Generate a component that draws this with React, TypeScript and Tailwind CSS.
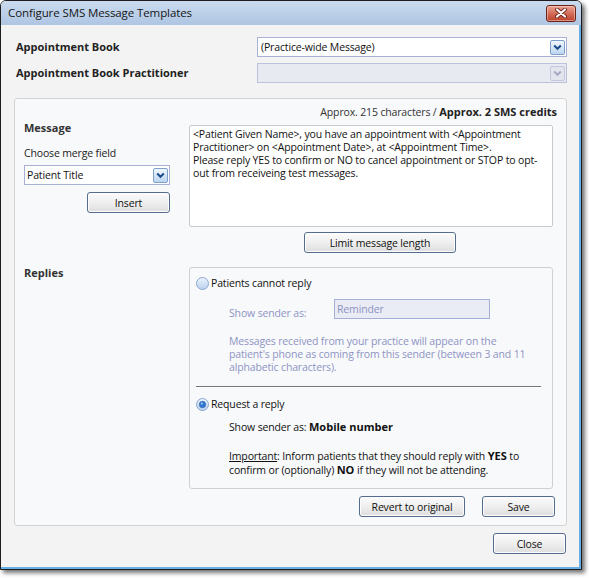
import React from "react";

function DropArrow({ disabled }: { disabled?: boolean }) {
  return (
    <div
      className={
        disabled
          ? "w-[15px] h-[15px] rounded-[2px] border border-[#c3c8dc] bg-[#e3e5ee] flex items-center justify-center"
          : "w-[15px] h-[15px] rounded-[2px] border border-[#7fa0cd] bg-gradient-to-b from-[#f1f7fd] to-[#bcd5f0] flex items-center justify-center"
      }
    >
      <svg width="9" height="7" viewBox="0 0 9 7">
        <path
          d="M1.2 1.5 L4.5 4.8 L7.8 1.5"
          stroke={disabled ? "#a7abc2" : "#1d4c8c"}
          strokeWidth="2"
          fill="none"
        />
      </svg>
    </div>
  );
}

function Radio({ checked, id }: { checked?: boolean; id: string }) {
  return (
    <svg width="13" height="13" viewBox="0 0 13 13" className="shrink-0">
      <defs>
        <linearGradient id={id} x1="0" y1="0" x2="0" y2="1">
          <stop offset="0" stopColor="#eef4fc" />
          <stop offset="1" stopColor="#b9d0ee" />
        </linearGradient>
      </defs>
      <circle cx="6.5" cy="6.5" r="6" fill={`url(#${id})`} stroke="#8aa6cf" />
      {checked && <circle cx="6.5" cy="6.5" r="3.2" fill="#3477cf" stroke="#1e5aa8" strokeWidth="0.6" />}
      {checked && <circle cx="5.8" cy="5.6" r="1" fill="#a9cdf5" />}
    </svg>
  );
}

function Btn({ children, className }: { children: React.ReactNode; className?: string }) {
  return (
    <div
      className={
        "h-[21px] rounded-[3px] border border-[#566c8e] bg-gradient-to-b from-[#fbfbfb] via-[#efefef] to-[#dedede] shadow-[inset_0_0_0_1px_#fdfdfd] flex items-center justify-center text-[#111] " +
        (className ?? "")
      }
    >
      {children}
    </div>
  );
}

export default function App() {
  const dis = "text-[#8e94c4]";
  const bold = "font-bold text-[11px] tracking-normal";
  return (
    <div className="w-[589px] h-[578px] bg-white font-['Open_Sans',sans-serif] text-[10.5px] tracking-[-0.15px] text-[#111] leading-[14px]">
      <div className="w-[582px] h-[570px] rounded-t-[6px] border border-[#1d1d1d] shadow-[3px_3px_4px_rgba(0,0,0,0.55)] flex flex-col overflow-hidden bg-[#f3f3f3]">
        {/* Title bar */}
        <div className="h-[24px] shrink-0 bg-gradient-to-b from-[#cadbef] to-[#aec5e2] flex items-center pl-[7px] pr-[5px]">
          <span className="text-[11.5px] tracking-[-0.1px] text-[#151515]">Configure SMS Message Templates</span>
          <div className="ml-auto w-[30px] h-[17px] rounded-[3px] border border-[#6b2216] bg-gradient-to-b from-[#e9a597] via-[#d46d58] to-[#b8412c] flex items-center justify-center shadow-[inset_0_0_0_1px_rgba(255,220,210,0.5)]">
            <svg width="14" height="10" viewBox="0 0 14 10">
              <path d="M3 1.5 L11 8.5 M11 1.5 L3 8.5" stroke="#6e241a" strokeWidth="4" strokeLinecap="round" />
              <path d="M3 1.5 L11 8.5 M11 1.5 L3 8.5" stroke="#ffffff" strokeWidth="2.2" strokeLinecap="round" />
            </svg>
          </div>
        </div>

        {/* Content */}
        <div className="flex-1 flex flex-col pl-[13px] pr-[12px] border-r-2 border-b-2 border-[#67b0e6]">
          {/* Row 1 */}
          <div className="mt-[12px] flex items-center h-[20px]">
            <span className={"pl-[2px] text-[#222] " + bold}>Appointment Book</span>
            <div className="ml-auto w-[310px] h-[20px] bg-white border border-[#a9b0d6] flex items-center pl-[3px] pr-[1px]">
              <span className="text-[#111]">(Practice-wide Message)</span>
              <div className="ml-auto">
                <DropArrow />
              </div>
            </div>
          </div>
          {/* Row 2 */}
          <div className="mt-[6px] flex items-center h-[20px]">
            <span className={"pl-[2px] text-[#222] " + bold}>Appointment Book Practitioner</span>
            <div className="ml-auto w-[310px] h-[20px] bg-[#e8eaf2] border border-[#bcc2da] flex items-center pr-[1px]">
              <div className="ml-auto">
                <DropArrow disabled />
              </div>
            </div>
          </div>

          {/* Panel */}
          <div className="mt-[15px] h-[428px] rounded-[3px] border border-[#d3d3d3] bg-[#f8f9fb] flex flex-col">
            <div className="pt-[6px] pr-[9px] text-right text-[#333] h-[20px]">
              Approx. 215 characters / <span className={"text-[#222] " + bold}>Approx. 2 SMS credits</span>
            </div>

            {/* Message row */}
            <div className="mt-[2px] flex">
              <div className="w-[174px] pl-[9px] flex flex-col">
                <div className={"text-[#333] h-[14px] " + bold}>Message</div>
                <div className="mt-[11px] h-[14px] text-[#222]">Choose merge field</div>
                <div className="mt-[5px] w-[146px] h-[20px] bg-white border border-[#a9b0d6] flex items-center pl-[2px] pr-[1px]">
                  <span className="text-[#111]">Patient Title</span>
                  <div className="ml-auto">
                    <DropArrow />
                  </div>
                </div>
                <Btn className="mt-[7px] ml-[63px] w-[83px]">Insert</Btn>
              </div>
              <div className="flex flex-col">
                <div className="mt-[4px] w-[364px] h-[102px] bg-white border border-[#c9c9c9] rounded-[2px] pl-[3px] pt-[2px] leading-[13px] whitespace-nowrap text-[#111]">
                  <div>{"<Patient Given Name>, you have an appointment with <Appointment"}</div>
                  <div>{"Practitioner> on <Appointment Date>, at <Appointment Time>."}</div>
                  <div>{"Please reply YES to confirm or NO to cancel appointment or STOP to opt-"}</div>
                  <div>{"out from receiveing test messages."}</div>
                </div>
                <Btn className="mt-[5px] ml-[115px] w-[152px]">Limit message length</Btn>
              </div>
            </div>

            {/* Replies row */}
            <div className="mt-[13px] flex">
              <div className={"w-[174px] pl-[9px] text-[#333] h-[14px] " + bold}>Replies</div>
              <div className="mt-[1px] w-[364px] h-[222px] rounded-[3px] border border-[#d0d0d0] bg-[#f8f9fb] flex flex-col">
                <div className="mt-[8px] pl-[6px] h-[14px] flex items-center gap-[2px]">
                  <Radio id="r1" />
                  <span className="text-[#111]">Patients cannot reply</span>
                </div>
                <div className="mt-[9px] pl-[39px] flex items-start">
                  <span className={"mt-[7px] w-[105px] " + dis}>Show sender as:</span>
                  <div className="w-[156px] h-[20px] border border-[#a7aed8] bg-[#e9ebf5] pl-[2px] flex items-center">
                    <span className={dis}>Reminder</span>
                  </div>
                </div>
                <div className={"mt-[15px] pl-[39px] leading-[13px] whitespace-nowrap " + dis}>
                  <div>Messages received from your practice will appear on the</div>
                  <div>patient's phone as coming from this sender (between 3 and 11</div>
                  <div>alphabetic characters).</div>
                </div>
                <div className="mt-[12px] ml-[6px] w-[345px] border-t border-[#767676] border-b border-b-white" />
                <div className="mt-[9px] pl-[6px] h-[14px] flex items-center gap-[2px]">
                  <Radio id="r2" checked />
                  <span className="text-[#111]">Request a reply</span>
                </div>
                <div className="mt-[9px] pl-[39px] h-[14px] text-[#111]">
                  Show sender as: <span className={bold}>Mobile number</span>
                </div>
                <div className="mt-[15px] pl-[39px] leading-[13px] whitespace-nowrap text-[#111]">
                  <div>
                    <span className="underline">Important</span>: Inform patients that they should reply with{" "}
                    <span className={bold}>YES</span> to
                  </div>
                  <div>
                    confirm or (optionally) <span className={bold}>NO</span> if they will not be attending.
                  </div>
                </div>
              </div>
            </div>

            {/* Buttons */}
            <div className="mt-[7px] flex justify-end pr-[11px] gap-[17px]">
              <Btn className="w-[106px]">Revert to original</Btn>
              <Btn className="w-[73px]">Save</Btn>
            </div>
          </div>

          <div className="mt-[7px] flex justify-end pr-[1px]">
            <Btn className="w-[73px]">Close</Btn>
          </div>
        </div>
      </div>
    </div>
  );
}
